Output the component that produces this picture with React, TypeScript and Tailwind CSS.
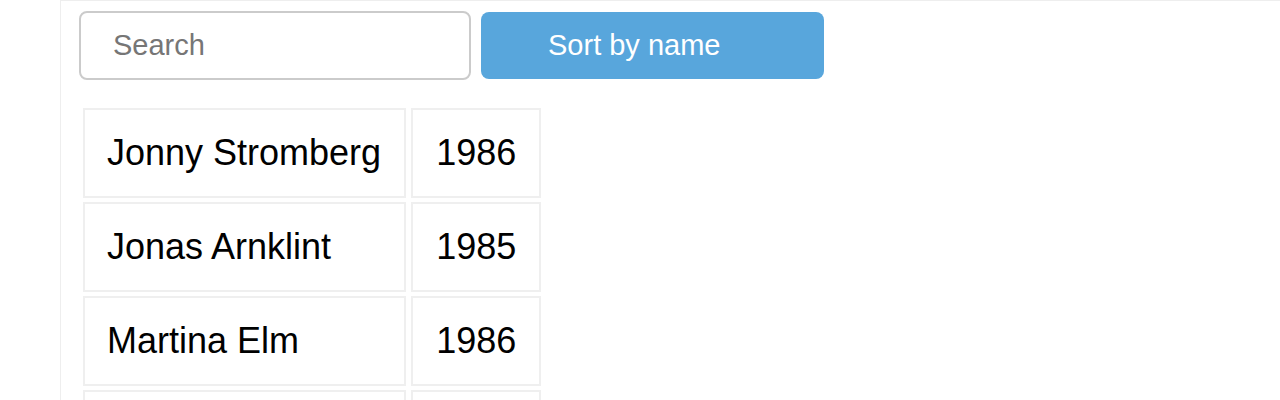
import {useState} from "react";

type Person = {name: string, year: number}

const people: Person[] = [
  {name: 'Jonny Stromberg', year: 1986},
  {name: 'Jonas Arnklint', year: 1985},
  {name: 'Martina Elm', year: 1986},
  {name: 'Gustaf Lindqvist', year: 1983},
]

const App = () => {
  const [query, setQuery] = useState('')
  const [sorted, setSorted] = useState(false)

  let rows = people.filter(p => p.name.toLowerCase().includes(query.toLowerCase()))
  if (sorted) rows = [...rows].sort((a, b) => a.name.localeCompare(b.name))

  return (
    <div className="h-[400px] w-[1280px] overflow-hidden bg-white font-['Liberation_Sans',Arial,sans-serif]">
      <div className="ml-[60px] h-full border-l border-t border-[#eeeeee] pl-[18px] pt-[10px]">
        <div className="flex items-start gap-[10px]">
          <input
            className="h-[69px] w-[392px] rounded-[8px] border-2 border-[#cbcbcb] pl-[32px] text-[29px] text-black outline-none placeholder:text-[#767676]"
            placeholder="Search"
            value={query}
            onChange={e => setQuery(e.target.value)}
          />
          <button
            className="mt-[1px] h-[67px] w-[343px] cursor-pointer rounded-[8px] bg-[#58a6dc] pl-[67px] text-left text-[29px] text-white"
            onClick={() => setSorted(!sorted)}
          >
            Sort by name
          </button>
        </div>
        <table className="-ml-[1px] mt-[24px] border-separate border-spacing-x-[5px] border-spacing-y-[4px] text-[36px] leading-[42px] text-black">
          <tbody>
            {rows.map(p => (
              <tr key={p.name}>
                <td className="border-2 border-[#efefef] py-[22px] pl-[22px] pr-[23px]">{p.name}</td>
                <td className="border-2 border-[#efefef] px-[23px] py-[22px]">{p.year}</td>
              </tr>
            ))}
          </tbody>
        </table>
      </div>
    </div>
  )
}

export default App
